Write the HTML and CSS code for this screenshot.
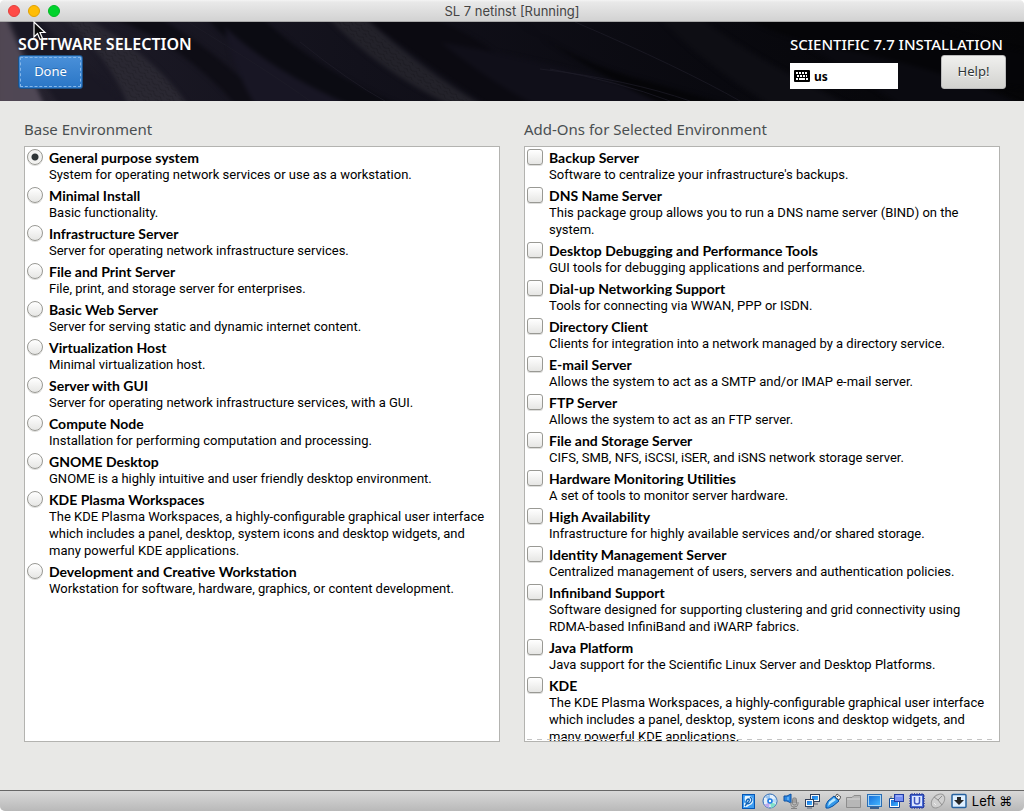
FILE: index.html
```html
<!DOCTYPE html>
<html lang="en">
<head>
<meta charset="utf-8">
<title>SL 7 netinst [Running]</title>
<link rel="stylesheet" href="styles.css">
</head>
<body>
<div class="window">
  <div class="titlebar">
    <div class="lights">
      <button class="light close" aria-label="Close"></button>
      <button class="light minimize" aria-label="Minimize"></button>
      <button class="light zoom" aria-label="Zoom"></button>
    </div>
    <span class="window-title">SL 7 netinst [Running]</span>
  </div>

  <header class="banner">
    <svg class="banner-art" viewBox="0 0 1024 79" preserveAspectRatio="none" aria-hidden="true">
      <defs>
        <linearGradient id="base" x1="0" x2="1" y1="0" y2="0">
          <stop offset="0" stop-color="#2c2834"/><stop offset=".1" stop-color="#1b1925"/>
          <stop offset=".35" stop-color="#12111b"/><stop offset=".7" stop-color="#09090f"/>
          <stop offset="1" stop-color="#050507"/>
        </linearGradient>
        <linearGradient id="mauve" x1="0" x2="1" y1="0" y2="0">
          <stop offset="0" stop-color="#504753"/><stop offset="1" stop-color="#4f4856"/>
        </linearGradient>
        <pattern id="ripple" width="9" height="8" patternUnits="userSpaceOnUse" patternTransform="rotate(40)">
          <path d="M0 2Q4 7 9 2M0 6Q4 11 9 6" fill="none" stroke="#15141b" stroke-width=".8"/>
        </pattern>
        <filter id="soft" color-interpolation-filters="sRGB"><feGaussianBlur stdDeviation="2"/></filter>
      </defs>
      <rect width="1024" height="79" fill="url(#base)"/>
      <g filter="url(#soft)">
        <path d="M-4-4H6Q25 40 44 83H-4Z" fill="url(#mauve)"/>
        <path d="M10-4H40Q95 60 130 83H60Q30 45 10-4Z" fill="#1a1824"/>
        <path d="M62-4H86Q150 30 188 83H128Q110 35 62-4Z" fill="#2a2832"/>
        <path d="M112-4H160Q240 45 262 83H236Q180 20 112-4Z" fill="#0e0d15"/>
        <path d="M206-4H262Q320 50 400 83H350Q260 55 206-4Z" fill="#0b0b12"/>
        <path d="M225 5Q270 48 350 83H255Q230 40 225 5Z" fill="#181624"/>
        <path d="M328-4H365Q425 50 482 83H450Q380 50 328-4Z" fill="#23222a"/>
        <path d="M365-4H430Q500 20 545 83H488Q430 45 365-4Z" fill="#0b0a11"/>
        <path d="M440 20Q560 40 690 83H535Q490 60 440 20Z" fill="#100f19"/>
        <path d="M515-4Q570 40 650 60L730 83H665Q580 45 515-4Z" fill="#050508"/>
        <path d="M660-4H700Q760 40 850 83H770Q700 40 660-4Z" fill="#0e0e14"/>
        <path d="M745-4Q830 38 1024 66V30Q950 12 900-4Z" fill="#050508"/>
        <path d="M800 20Q930 40 1024 83H900Q850 50 800 20Z" fill="#0a0a10"/>
      </g>
      <path d="M66 0H84Q155 35 184 79H130Q118 48 66 0Z" fill="url(#ripple)" opacity=".5"/>
      <path d="M335 0H363Q420 50 470 79H450Q380 45 335 0Z" fill="url(#ripple)" opacity=".7"/>
      <path d="M540 47Q630 58 690 79M550 47Q620 60 670 79M188 0Q270 50 310 79M300 20Q350 60 385 79M575 0Q680 45 740 79" fill="none" stroke="#1e1c28" stroke-width=".7"/>
    </svg>
    <div class="banner-left">
      <h1 class="screen-title">SOFTWARE SELECTION</h1>
      <button class="btn done">Done</button>
    </div>
    <div class="banner-right">
      <div class="product">SCIENTIFIC 7.7 INSTALLATION</div>
      <div class="banner-tools">
        <button class="keyboard">
          <svg width="16" height="12" viewBox="0 0 16 12" aria-hidden="true"><rect width="16" height="12" rx="1" fill="#000"/><path d="M2 3h2m1 0h2m1 0h2m1 0h2M3 6h2m1 0h2m1 0h2m1 0h1M2 9h2m1 0h6m1 0h2" stroke="#fff" stroke-width="2"/></svg>
          us
        </button>
        <button class="btn help">Help!</button>
      </div>
    </div>
    <svg class="pointer" width="14" height="20" viewBox="0 0 14 20" aria-hidden="true"><path d="M1 1V16L4.500 12.500 7 18.500 9.500 17.500 7 11.500H12Z" fill="#0b0b0b" stroke="#fff" stroke-width="1.200"/></svg>
  </header>

  <main class="content">
    <section class="pane">
      <h2 class="pane-title">Base Environment</h2>
      <div class="list">
        <label class="item"><input type="radio" name="env" checked><span class="text"><b>General purpose system</b><span>System for operating network services or use as a workstation.</span></span></label>
        <label class="item"><input type="radio" name="env"><span class="text"><b>Minimal Install</b><span>Basic functionality.</span></span></label>
        <label class="item"><input type="radio" name="env"><span class="text"><b>Infrastructure Server</b><span>Server for operating network infrastructure services.</span></span></label>
        <label class="item"><input type="radio" name="env"><span class="text"><b>File and Print Server</b><span>File, print, and storage server for enterprises.</span></span></label>
        <label class="item"><input type="radio" name="env"><span class="text"><b>Basic Web Server</b><span>Server for serving static and dynamic internet content.</span></span></label>
        <label class="item"><input type="radio" name="env"><span class="text"><b>Virtualization Host</b><span>Minimal virtualization host.</span></span></label>
        <label class="item"><input type="radio" name="env"><span class="text"><b>Server with GUI</b><span>Server for operating network infrastructure services, with a GUI.</span></span></label>
        <label class="item"><input type="radio" name="env"><span class="text"><b>Compute Node</b><span>Installation for performing computation and processing.</span></span></label>
        <label class="item"><input type="radio" name="env"><span class="text"><b>GNOME Desktop</b><span>GNOME is a highly intuitive and user friendly desktop environment.</span></span></label>
        <label class="item"><input type="radio" name="env"><span class="text"><b>KDE Plasma Workspaces</b><span>The KDE Plasma Workspaces, a highly-configurable graphical user interface which includes a panel, desktop, system icons and desktop widgets, and many powerful KDE applications.</span></span></label>
        <label class="item"><input type="radio" name="env"><span class="text"><b>Development and Creative Workstation</b><span>Workstation for software, hardware, graphics, or content development.</span></span></label>
      </div>
    </section>
    <section class="pane">
      <h2 class="pane-title">Add-Ons for Selected Environment</h2>
      <div class="list more">
        <label class="item"><input type="checkbox"><span class="text"><b>Backup Server</b><span>Software to centralize your infrastructure's backups.</span></span></label>
        <label class="item"><input type="checkbox"><span class="text"><b>DNS Name Server</b><span>This package group allows you to run a DNS name server (BIND) on the system.</span></span></label>
        <label class="item"><input type="checkbox"><span class="text"><b>Desktop Debugging and Performance Tools</b><span>GUI tools for debugging applications and performance.</span></span></label>
        <label class="item"><input type="checkbox"><span class="text"><b>Dial-up Networking Support</b><span>Tools for connecting via WWAN, PPP or ISDN.</span></span></label>
        <label class="item"><input type="checkbox"><span class="text"><b>Directory Client</b><span>Clients for integration into a network managed by a directory service.</span></span></label>
        <label class="item"><input type="checkbox"><span class="text"><b>E-mail Server</b><span>Allows the system to act as a SMTP and/or IMAP e-mail server.</span></span></label>
        <label class="item"><input type="checkbox"><span class="text"><b>FTP Server</b><span>Allows the system to act as an FTP server.</span></span></label>
        <label class="item"><input type="checkbox"><span class="text"><b>File and Storage Server</b><span>CIFS, SMB, NFS, iSCSI, iSER, and iSNS network storage server.</span></span></label>
        <label class="item"><input type="checkbox"><span class="text"><b>Hardware Monitoring Utilities</b><span>A set of tools to monitor server hardware.</span></span></label>
        <label class="item"><input type="checkbox"><span class="text"><b>High Availability</b><span>Infrastructure for highly available services and/or shared storage.</span></span></label>
        <label class="item"><input type="checkbox"><span class="text"><b>Identity Management Server</b><span>Centralized management of users, servers and authentication policies.</span></span></label>
        <label class="item"><input type="checkbox"><span class="text"><b>Infiniband Support</b><span>Software designed for supporting clustering and grid connectivity using RDMA-based InfiniBand and iWARP fabrics.</span></span></label>
        <label class="item"><input type="checkbox"><span class="text"><b>Java Platform</b><span>Java support for the Scientific Linux Server and Desktop Platforms.</span></span></label>
        <label class="item"><input type="checkbox"><span class="text"><b>KDE</b><span>The KDE Plasma Workspaces, a highly-configurable graphical user interface which includes a panel, desktop, system icons and desktop widgets, and many powerful KDE applications.</span></span></label>
      </div>
    </section>
  </main>

  <footer class="statusbar">
    <svg class="ico" viewBox="0 0 16 16" role="img" aria-label="Hard disks"><defs><linearGradient id="blue" x1="0" y1="0" x2="1" y2="1"><stop offset="0" stop-color="#1670dc"/><stop offset="1" stop-color="#43b4ff"/></linearGradient></defs><rect x="1.500" y="1.500" width="12" height="14" fill="#3c9cf2" stroke="#0756b4"/><path d="M4 3H9Q12 4 12 8Q12 11 9 12L6 14H3V10L5 9Q3 7 4 3Z" fill="#e8f5ff"/><path d="M9 4Q12 6 10 9T5 10Q5 6 8 6Q9 7 8 8L4 13" fill="none" stroke="#1064b9" stroke-width="1.300"/></svg>
    <svg class="ico" viewBox="0 0 16 16" role="img" aria-label="Optical drives"><circle cx="8" cy="8" r="7" fill="#e4effa" stroke="#2a69b5"/><path d="M8 8L3 4Q5 2 8 2Z" fill="#9bc4ee"/><path d="M8 9L14 11Q12 14 9 15Z" fill="#81e2c7"/><path d="M8 9L2 12Q4 14 7 15Z" fill="#bdabed"/><path d="M8 8L14 5Q15 8 14 10Z" fill="#b7dbf6"/><circle cx="8" cy="8" r="2.800" fill="#1f7be5"/><circle cx="8" cy="8" r="1.200" fill="#fff"/></svg>
    <svg class="ico" viewBox="0 0 16 16" role="img" aria-label="Audio"><path d="M1 3H4L8 1V10L4 8H1Z" fill="#2d87e3" stroke="#0c50a1"/><path d="M5 4V7" stroke="#8fd2ff"/><rect x="9.500" y="5" width="4" height="7" rx="1.500" fill="#b8b8b8" stroke="#818181"/><path d="M10 7H13M10 9H13M8 9V12Q8 14 11 14Q15 14 15 11V9M11 14V16M8 15.500H14" fill="none" stroke="#858585"/></svg>
    <svg class="ico" viewBox="0 0 16 16" role="img" aria-label="Network"><rect x="6.500" y="1.500" width="9" height="7" fill="#f7f7f7" stroke="#31405b"/><rect x="8" y="3" width="6" height="4" fill="url(#blue)"/><path d="M10 9V11H14" fill="none" stroke="#667"/><rect x="1.500" y="6.500" width="8" height="7" fill="#f7f7f7" stroke="#31405b"/><rect x="3" y="8" width="5" height="4" fill="url(#blue)"/><path d="M3 15H8" stroke="#59677e"/></svg>
    <svg class="ico" viewBox="0 0 16 16" role="img" aria-label="USB"><path d="M10 4L12 1L16 4L14 7Z" fill="#eee" stroke="#555"/><path d="M3 8L9 3L14 8L8 13Q3 16 1 15Q0 12 3 8Z" fill="#3498e9" stroke="#0751a4"/><path d="M4 9L9 5L11 7Q6 10 3 13Z" fill="#b9e8ff"/><path d="M12 3L13 4" stroke="#444"/></svg>
    <svg class="ico" viewBox="0 0 16 16" role="img" aria-label="Shared folders"><path d="M.5 14.500V4.500H6L8 2.500H14.500V14.500Z" fill="#b7b7b7" stroke="#8d8d8d"/><path d="M1 6H14" stroke="#d5d5d5"/></svg>
    <svg class="ico" viewBox="0 0 16 16" role="img" aria-label="Display"><rect x=".5" y="1.500" width="14" height="12" fill="#a8d4f5" stroke="#2a6db3"/><rect x="2" y="3" width="11" height="9" fill="url(#blue)"/><path d="M3 15H12" stroke="#3b608e" stroke-width="2"/></svg>
    <svg class="ico" viewBox="0 0 16 16" role="img" aria-label="Recording"><path d="M1.500 5.500H11.500V14.500H1.500Z" fill="#fff" stroke="#174e98"/><rect x="3" y="7" width="7" height="6" fill="url(#blue)"/><rect x="6.500" y="1.500" width="9" height="7" fill="#7890f2" stroke="#223da5"/><path d="M8 3H14" stroke="#b9c7ff"/><path d="M3 3V5" stroke="#777"/></svg>
    <svg class="ico" viewBox="0 0 16 16" role="img" aria-label="Processor"><path d="M3 0V16M5.500 0V16M8 0V16M10.500 0V16M13 0V16M0 3H16M0 5.500H16M0 8H16M0 10.500H16M0 13H16" stroke="#414fae"/><rect x="1.500" y="1.500" width="13" height="13" fill="#496bd5" stroke="#2941a4"/><rect x="3" y="3" width="10" height="10" fill="#dbe5ff"/><path d="M5.500 4V9Q5.500 11 8 11Q10.500 11 10.500 9V4" fill="none" stroke="#3c53bd" stroke-width="1.500"/></svg>
    <svg class="ico" viewBox="0 0 16 16" role="img" aria-label="Mouse integration"><ellipse cx="8" cy="8" rx="5.500" ry="8" transform="rotate(43 8 8)" fill="#d0d0d0" stroke="#989898"/><path d="M4 4Q8 6 12 12M8 7L12 3" fill="none" stroke="#8e8e8e"/><path d="M4 10L6 12" stroke="#eee"/></svg>
    <svg class="ico" viewBox="0 0 16 16" role="img" aria-label="Keyboard capture"><rect x="1" y="1.500" width="14" height="13" rx="1" fill="#deefff" stroke="#26619f" stroke-width="1.500"/><path d="M6 4H10V7H13L8 12L3 7H6Z" fill="#272727"/></svg>
    <span class="host-key">Left <span class="command">⌘</span></span>
  </footer>
</div>
</body>
</html>
```
FILE: styles.css
```css
* { box-sizing: border-box; }
body { margin: 0; background: #fff; font: 13px/17px Roboto, "Noto Sans", sans-serif; color: #000; }
button { font: inherit; margin: 0; }
.window { display: flex; flex-direction: column; height: 100vh; border-radius: 5px; overflow: hidden; background: #e8e8e6; }
.titlebar { position: relative; flex: none; display: flex; align-items: center; justify-content: center; height: 22px; background: linear-gradient(#f4f4f4, #e9e9e9 10%, #d2d2d2); border-bottom: 1px solid #aaa; }
.lights { position: absolute; left: 8px; top: 5px; display: flex; gap: 8px; }
.light { width: 12px; height: 12px; padding: 0; border: 1px solid; border-radius: 50%; }
.close { background: #ff4b47; border-color: #e2403c; }
.minimize { background: #ffbd05; border-color: #e0a000; }
.zoom { background: #00d32c; border-color: #00b824; }
.window-title { font: 13px/20px Inter, "Liberation Sans", sans-serif; color: #444; }

.banner { position: relative; flex: none; display: flex; justify-content: space-between; padding: 13px 18px 12px; background: #0d0c13; color: #fff; }
.banner-art { position: absolute; inset: 0; width: 100%; height: 100%; }
.banner-left, .banner-right { position: relative; display: flex; flex-direction: column; gap: 2px; }
.banner-left { align-items: flex-start; }
.banner-right { min-width: 216px; }
.screen-title, .product { margin: 0; font: 600 16px/18px "Noto Sans", sans-serif; }
.product { font-size: 15px; font-weight: 500; }
.banner-tools { display: flex; justify-content: space-between; align-items: flex-end; }
.btn { width: 65px; height: 34px; padding: 0 0 2px; border-radius: 3px; font: 13px/17px "Noto Sans", sans-serif; }
.done { color: #fff; background: linear-gradient(#4a90d9, #2a76c6); border: 1px solid #1c5187; outline: 1px dashed #86b7e8; outline-offset: -3px; text-shadow: 0 -1px #2467ad; }
.help { color: #2e3436; background: linear-gradient(#f0f0ee, #d2d2cf); border: 1px solid #bbb; text-shadow: 0 1px #fff; }
.keyboard { display: flex; align-items: center; gap: 4px; width: 108px; height: 26px; padding: 0 4px; border: 0; background: #fff; color: #000; font: 700 12px/17px "Noto Sans", sans-serif; }
.pointer { position: absolute; left: 33px; top: -1px; }

.content { flex: 1; min-height: 0; display: grid; grid-template-columns: 1fr 1fr; gap: 24px; padding: 18px 24px 48px; }
.pane { display: flex; flex-direction: column; min-width: 0; min-height: 0; }
.pane-title { margin: 0 0 7px; font: 15px/20px "Noto Sans", sans-serif; color: #4a4f51; }
.list { position: relative; flex: 1; min-height: 0; display: flex; flex-direction: column; gap: 4px; padding: 2px; overflow: hidden; background: #fff; border: 1px solid #b3b3b0; }
.more::after { content: ""; position: absolute; left: 2px; right: 2px; bottom: 1px; height: 1px; background: repeating-linear-gradient(90deg, #c4c4c4 0 5px, #fff 5px 10px); }
.item { flex: none; display: flex; align-items: flex-start; gap: 6px; }
.item input { appearance: none; flex: none; width: 16px; height: 16px; margin: 0; border: 1px solid #999994; background: linear-gradient(#fff, #e6e6e4); border-radius: 3px; box-shadow: 0 1px #dededc; }
.item input[type="radio"] { border-radius: 50%; }
.item input[type="radio"]:checked { background: radial-gradient(circle, #2e3436 0 3px, #f2f2f0 4px); }
.text { display: flex; flex-direction: column; padding-right: 8px; }
.text b { font: 700 14px/17px Lato, "Noto Sans", sans-serif; }

.statusbar { flex: none; display: flex; align-items: center; justify-content: flex-end; gap: 5px; height: 21px; padding: 0 12px; border-top: 1px solid #666; background: linear-gradient(#d8d8d8, #b9b9b9); }
.ico { width: 16px; height: 16px; }
.host-key { font: 13px/18px Inter, "Liberation Sans", sans-serif; }
.command { font-family: "DejaVu Sans", sans-serif; }
```
